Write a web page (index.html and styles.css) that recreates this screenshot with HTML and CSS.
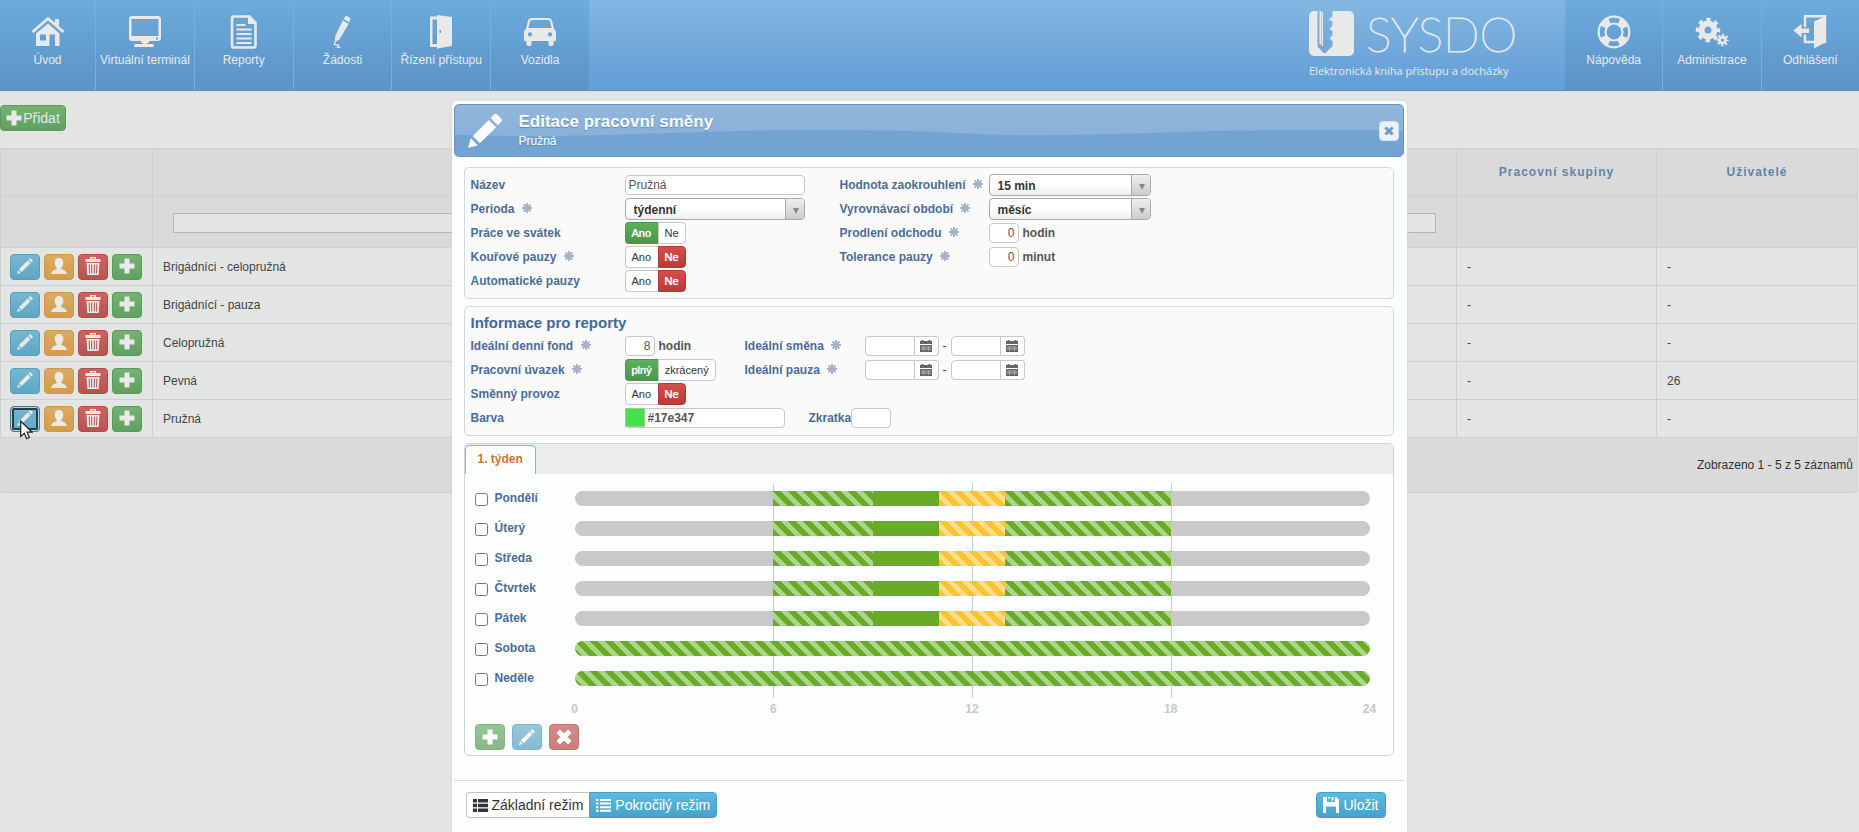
FILE: index.html
```html
<!DOCTYPE html>
<html lang="cs">
<head>
<meta charset="utf-8">
<title>SYSDO</title>
<link rel="stylesheet" href="styles.css">
</head>
<body>
<svg class="sprite" aria-hidden="true">
  <symbol id="i-pencil" viewBox="0 0 16 16"><path d="M0 16l1.3-4.6 3.3 3.3zM2.2 10.4l7.6-7.6 3.400 3.400-7.600 7.600zM10.7 1.9l1.5-1.5a1.2 1.2 0 0 1 1.700 0l1.700 1.700a1.2 1.2 0 0 1 0 1.700l-1.500 1.500z"/></symbol>
  <symbol id="i-slim" viewBox="0 0 16 16"><path d="M0 16l1.200-3.800 2.600 2.600zM1.900 11.300l8.800-8.800 2.800 2.800-8.800 8.800zM11.500 1.700L13.200 0 16 2.800l-1.700 1.700z"/></symbol>
  <symbol id="i-user" viewBox="0 0 16 16"><path d="M8 0c2.600 0 4.300 1.700 4.300 4.600 0 2.400-1 4.400-2 5.300v1.100c2.600.9 5.200 2 5.700 5H0c.5-3 3.100-4.100 5.700-5V9.900c-1-.9-2-2.900-2-5.300C3.700 1.700 5.400 0 8 0z"/></symbol>
  <symbol id="i-trash" viewBox="0 0 16 18"><path fill-rule="evenodd" d="M5 0h6v2h4.500v3H.5V2H5zM6.500 1.200V2h3v-.8zM1.500 6h13l-.8 12H2.300zM3.600 7.500l.4 9h1l-.3-9zM6 7.500l.2 9h1l-.1-9zM8.900 7.500l-.1 9h1l.2-9zM11.300 7.500l-.3 9h1l.4-9z"/></symbol>
  <symbol id="i-plus" viewBox="0 0 16 16"><path d="M5.500.5h5v5h5v5h-5v5h-5v-5h-5v-5h5z"/></symbol>
  <symbol id="i-cross" viewBox="0 0 16 16"><path d="M4 1.500l4 4 4-4 2.500 2.500-4 4 4 4-2.500 2.500-4-4-4 4L1.500 12l4-4-4-4z" stroke="currentColor" stroke-width="1.500" stroke-linejoin="round"/></symbol>
  <symbol id="i-star" viewBox="0 0 12 12"><path d="M6 0v12M0 6h12M1.800 1.800l8.400 8.400M10.200 1.800l-8.400 8.400" fill="none" stroke="currentColor" stroke-width="2.300"/></symbol>
  <symbol id="i-cal" viewBox="0 0 12 12"><path fill-rule="evenodd" d="M0 1h1.500V0h2v1h5V0h2v1H12v3H0zM0 5h12v7H0zM1 6.800v.5h10v-.5zM1 8.800v.5h10v-.5zM3.500 7v4H4V7zM8 7v4h.5V7z"/></symbol>
  <symbol id="i-list" viewBox="0 0 15 13"><path d="M0 0h4v3.500H0zM5 0h10v3.500H5zM0 4.700h4v3.500H0zM5 4.700h10v3.500H5zM0 9.400h4v3.500H0zM5 9.400h10v3.500H5z"/></symbol>
  <symbol id="i-lines" viewBox="0 0 15 13"><path d="M0 0h2.500v2H0zM4 0h11v2H4zM0 3.600h2.500v2H0zM4 3.600h11v2H4zM0 7.200h2.500v2H0zM4 7.200h11v2H4zM0 10.800h2.500v2H0zM4 10.800h11v2H4z"/></symbol>
  <symbol id="i-save" viewBox="0 0 16 16"><path d="M0 0h4v5h8V0h1.500L16 2.500V16h-3V9.500H3V16H0zM8.500 0h2v3.500h-2zM5 0h2v1.500H5z"/></symbol>
</svg>

<header class="topbar">
  <nav class="menu menu-main">
    <a href="#"><svg viewBox="0 0 34 34"><path d="M1.500 17L17 3.500 32.500 17" fill="none" stroke="currentColor" stroke-width="2.800"/><path fill-rule="evenodd" d="M24 4h4v9l-4-3.500zM17 8.500l11.500 10V31H24V19.500h-5.500V31H5V18.500zM9 19.500v6h6v-6z"/></svg>Úvod</a>
    <a href="#"><svg viewBox="0 0 34 34"><path fill-rule="evenodd" d="M4 1h26a3 3 0 0 1 3 3v19a3 3 0 0 1-3 3h-9v2h-2v1h5.500a1.400 1.400 0 0 1 0 3h-17a1.400 1.400 0 0 1 0-3H15v-1h-2v-2H4a3 3 0 0 1-3-3V4a3 3 0 0 1 3-3zM3.500 4v17h27V4zM28 22.500v2h2v-2z"/></svg>Virtuální terminál</a>
    <a href="#"><svg viewBox="0 0 34 34"><path d="M7 1.500h15.500l6 6.500v22.500a2 2 0 0 1-2 2H7a2 2 0 0 1-2-2v-27a2 2 0 0 1 2-2z" fill="none" stroke="currentColor" stroke-width="2.600"/><path d="M21 1l8 8h-8zM9.500 9h9v2h-9zM9.500 13.500h15v2h-15zM9.500 18h15v2h-15zM9.500 22.500h15v2h-15zM9.500 27h15v2h-15z"/></svg>Reporty</a>
    <a href="#"><svg viewBox="0 0 34 34"><path d="M21 .5l4.500 2.700-1.300 4.300-5.500-3.500zM17.800 5.300l5.800 3.600-9 15.400-4.700 3 .3-6z"/><path d="M10 26.500l-.5 3 4 .8-1 2h3" fill="none" stroke="currentColor" stroke-width="1.300"/></svg>Žádosti</a>
    <a href="#"><svg viewBox="0 0 34 34"><path fill-rule="evenodd" d="M6 1.500h7V0l15 2v29l-15 2.500V32H6zM8.500 4.500V29H13V4.500zM15.500 15v3h1.500v-3z"/></svg>Řízení přístupu</a>
    <a href="#"><svg viewBox="0 0 34 34"><path fill-rule="evenodd" d="M9 3h16c2.500 0 3.700 1.400 4.200 3.500L31 14c1.400.9 2 2 2 3.600V26h-2.500v3.500c0 2-5 2-5 0V26h-17v3.500c0 2-5 2-5 0V26H1v-8.400C1 16 1.600 14.900 3 14l1.800-7.500C5.300 4.400 6.500 3 9 3zM9 5C7.700 5 7.200 5.700 6.900 6.900L5.300 13h23.400l-1.600-6.100C26.800 5.700 26.300 5 25 5zM7 17.200a2.200 2.200 0 1 0 .01 0zM27 17.200a2.200 2.200 0 1 0 .01 0z"/></svg>Vozidla</a>
  </nav>
  <div class="brand">
    <div class="brand-row">
      <svg class="brand-mark" viewBox="0 0 45 45"><path fill-rule="evenodd" d="M5 0h35a5 5 0 0 1 5 5v35a5 5 0 0 1-5 5H5a5 5 0 0 1-5-5V5a5 5 0 0 1 5-5zM8.500 0v35.500l6 6.500h2l7-7v-5l-3-2.500 3-3.500v-4l-3-2 3-3.500v-4l-4-2 4-3v-5.500h-11v33.500h-2V0z"/><path d="M13 1h1v34h-1z"/></svg>
      <span class="brand-name">SYSDO</span>
    </div>
    <span class="brand-tag">Elektronická kniha přístupu a docházky</span>
  </div>
  <nav class="menu menu-side">
    <a href="#"><svg viewBox="0 0 34 34"><circle cx="17" cy="17" r="15.300" fill="none" stroke="currentColor" stroke-width="2.200"/><circle cx="17" cy="17" r="8.500" fill="none" stroke="currentColor" stroke-width="2.200"/><circle cx="17" cy="17" r="12" fill="none" stroke="currentColor" stroke-width="8" stroke-dasharray="8.850 10" stroke-dashoffset="-5"/></svg>Nápověda</a>
    <a href="#"><svg viewBox="0 0 34 34"><circle cx="13" cy="15" r="6.500" fill="none" stroke="currentColor" stroke-width="6"/><circle cx="13" cy="15" r="10.500" fill="none" stroke="currentColor" stroke-width="3.500" stroke-dasharray="4.250 4" stroke-dashoffset="2"/><circle cx="27.500" cy="25" r="3" fill="none" stroke="currentColor" stroke-width="2.800"/><circle cx="27.500" cy="25" r="5" fill="none" stroke="currentColor" stroke-width="2.500" stroke-dasharray="2 1.930" stroke-dashoffset="1"/></svg>Administrace</a>
    <a href="#"><svg viewBox="0 0 34 34"><path d="M12 12V1.300h20V27h-5M12 19.500V27h9" fill="none" stroke="currentColor" stroke-width="2.400"/><path d="M33 1v26l-12 6.500V6.500zM.500 15.500L8.500 9v4.500H16v4.500H8.500v4.500z"/></svg>Odhlášení</a>
  </nav>
</header>

<main class="page">
  <button class="btn green add" type="button"><svg><use href="#i-plus"/></svg>Přidat</button>
  <table class="grid">
    <colgroup><col class="c-act"><col><col class="c-num"><col class="c-last"></colgroup>
    <thead>
      <tr class="head"><th></th><th></th><th>Pracovní skupiny</th><th>Uživatelé</th></tr>
      <tr class="filter"><td></td><td><input type="text" aria-label="Filtr názvu"></td><td></td><td></td></tr>
    </thead>
    <tbody>
      <tr><td><div class="acts"><button class="btn blue sq" aria-label="Upravit"><svg><use href="#i-slim"/></svg></button><button class="btn orange sq" aria-label="Uživatelé"><svg><use href="#i-user"/></svg></button><button class="btn red sq" aria-label="Smazat"><svg class="trash"><use href="#i-trash"/></svg></button><button class="btn green sq" aria-label="Přidat"><svg><use href="#i-plus"/></svg></button></div></td><td>Brigádníci - celopružná</td><td>-</td><td>-</td></tr>
      <tr><td><div class="acts"><button class="btn blue sq" aria-label="Upravit"><svg><use href="#i-slim"/></svg></button><button class="btn orange sq" aria-label="Uživatelé"><svg><use href="#i-user"/></svg></button><button class="btn red sq" aria-label="Smazat"><svg class="trash"><use href="#i-trash"/></svg></button><button class="btn green sq" aria-label="Přidat"><svg><use href="#i-plus"/></svg></button></div></td><td>Brigádnící - pauza</td><td>-</td><td>-</td></tr>
      <tr><td><div class="acts"><button class="btn blue sq" aria-label="Upravit"><svg><use href="#i-slim"/></svg></button><button class="btn orange sq" aria-label="Uživatelé"><svg><use href="#i-user"/></svg></button><button class="btn red sq" aria-label="Smazat"><svg class="trash"><use href="#i-trash"/></svg></button><button class="btn green sq" aria-label="Přidat"><svg><use href="#i-plus"/></svg></button></div></td><td>Celopružná</td><td>-</td><td>-</td></tr>
      <tr><td><div class="acts"><button class="btn blue sq" aria-label="Upravit"><svg><use href="#i-slim"/></svg></button><button class="btn orange sq" aria-label="Uživatelé"><svg><use href="#i-user"/></svg></button><button class="btn red sq" aria-label="Smazat"><svg class="trash"><use href="#i-trash"/></svg></button><button class="btn green sq" aria-label="Přidat"><svg><use href="#i-plus"/></svg></button></div></td><td>Pevná</td><td>-</td><td>26</td></tr>
      <tr><td><div class="acts"><button class="btn blue sq focused" aria-label="Upravit"><svg><use href="#i-slim"/></svg></button><button class="btn orange sq" aria-label="Uživatelé"><svg><use href="#i-user"/></svg></button><button class="btn red sq" aria-label="Smazat"><svg class="trash"><use href="#i-trash"/></svg></button><button class="btn green sq" aria-label="Přidat"><svg><use href="#i-plus"/></svg></button><svg class="cursor" viewBox="0 0 13 20"><path d="M.7 1v15.500l3.600-3.300 2.300 5.500 2.800-1.200-2.300-5.300H12z" fill="#fff" stroke="#222" stroke-width="1.200"/></svg></div></td><td>Pružná</td><td>-</td><td>-</td></tr>
    </tbody>
  </table>
  <div class="summary">Zobrazeno 1 - 5 z 5 záznamů</div>
</main>

<div class="dialog" role="dialog" aria-labelledby="dlg-title">
  <div class="dialog-head">
    <svg class="wave" viewBox="0 0 950 53" preserveAspectRatio="none"><path d="M0 31C130 36 240 25 380 26S510 32 590 31.500 760 26 838 26 920 26 950 27V53H0z"/></svg>
    <svg class="dialog-icon"><use href="#i-pencil"/></svg>
    <div class="dialog-titles"><h1 id="dlg-title">Editace pracovní směny</h1><p>Pružná</p></div>
    <button class="close" type="button" aria-label="Zavřít"><svg><use href="#i-cross"/></svg></button>
  </div>

  <form class="dialog-body">
    <section class="panel form-basic">
      <label for="nazev">Název</label>
      <div><input class="txt" id="nazev" type="text" value="Pružná"></div>
      <label for="zaok">Hodnota zaokrouhlení <svg class="star"><use href="#i-star"/></svg></label>
      <div><span class="sel short"><select id="zaok"><option>15 min</option></select></span></div>

      <label for="perioda">Perioda <svg class="star"><use href="#i-star"/></svg></label>
      <div><span class="sel"><select id="perioda"><option>týdenní</option></select></span></div>
      <label for="vyrov">Vyrovnávací období <svg class="star"><use href="#i-star"/></svg></label>
      <div><span class="sel short"><select id="vyrov"><option>měsíc</option></select></span></div>

      <span class="lbl">Práce ve svátek</span>
      <div class="toggle"><label class="on"><input type="radio" name="svatek" checked>Ano</label><label><input type="radio" name="svatek">Ne</label></div>
      <label for="prodl">Prodlení odchodu <svg class="star"><use href="#i-star"/></svg></label>
      <div><input class="num" id="prodl" type="text" value="0"><span class="unit">hodin</span></div>

      <span class="lbl">Kouřové pauzy <svg class="star"><use href="#i-star"/></svg></span>
      <div class="toggle"><label><input type="radio" name="kour">Ano</label><label class="off"><input type="radio" name="kour" checked>Ne</label></div>
      <label for="toler">Tolerance pauzy <svg class="star"><use href="#i-star"/></svg></label>
      <div><input class="num" id="toler" type="text" value="0"><span class="unit">minut</span></div>

      <span class="lbl">Automatické pauzy</span>
      <div class="toggle"><label><input type="radio" name="auto">Ano</label><label class="off"><input type="radio" name="auto" checked>Ne</label></div>
    </section>

    <section class="panel form-report">
      <h2>Informace pro reporty</h2>
      <label for="fond">Ideální denní fond <svg class="star"><use href="#i-star"/></svg></label>
      <div><input class="num" id="fond" type="text" value="8"><span class="unit">hodin</span></div>
      <label for="smena">Ideální směna <svg class="star"><use href="#i-star"/></svg></label>
      <div class="range"><span class="time"><input id="smena" type="text"><button type="button" aria-label="Vybrat čas"><svg><use href="#i-cal"/></svg></button></span>-<span class="time"><input type="text" aria-label="Směna do"><button type="button" aria-label="Vybrat čas"><svg><use href="#i-cal"/></svg></button></span></div>

      <span class="lbl">Pracovní úvazek <svg class="star"><use href="#i-star"/></svg></span>
      <div class="toggle"><label class="on"><input type="radio" name="uvazek" checked>plný</label><label><input type="radio" name="uvazek">zkrácený</label></div>
      <label for="pauza">Ideální pauza <svg class="star"><use href="#i-star"/></svg></label>
      <div class="range"><span class="time"><input id="pauza" type="text"><button type="button" aria-label="Vybrat čas"><svg><use href="#i-cal"/></svg></button></span>-<span class="time"><input type="text" aria-label="Pauza do"><button type="button" aria-label="Vybrat čas"><svg><use href="#i-cal"/></svg></button></span></div>

      <span class="lbl first">Směnný provoz</span>
      <div class="toggle"><label><input type="radio" name="provoz">Ano</label><label class="off"><input type="radio" name="provoz" checked>Ne</label></div>

      <label class="first" for="barva">Barva</label>
      <div class="wide"><span class="color"><span class="swatch"></span><input id="barva" type="text" value="#17e347"></span><label for="zkratka">Zkratka</label><input class="abbr" id="zkratka" type="text"></div>
    </section>

    <section class="tabs">
      <div class="tab-bar"><a class="tab" href="#tyden">1. týden</a></div>
      <div class="week" id="tyden">
        <div class="days">
          <div class="lines"><i></i><i></i><i></i><i></i></div>
          <label><input type="checkbox">Pondělí</label><div class="bar"><i class="none q"></i><i class="flex h3"></i><i class="core h2"></i><i class="brk h2"></i><i class="flex h5"></i><i class="none q"></i></div>
          <label><input type="checkbox">Úterý</label><div class="bar"><i class="none q"></i><i class="flex h3"></i><i class="core h2"></i><i class="brk h2"></i><i class="flex h5"></i><i class="none q"></i></div>
          <label><input type="checkbox">Středa</label><div class="bar"><i class="none q"></i><i class="flex h3"></i><i class="core h2"></i><i class="brk h2"></i><i class="flex h5"></i><i class="none q"></i></div>
          <label><input type="checkbox">Čtvrtek</label><div class="bar"><i class="none q"></i><i class="flex h3"></i><i class="core h2"></i><i class="brk h2"></i><i class="flex h5"></i><i class="none q"></i></div>
          <label><input type="checkbox">Pátek</label><div class="bar"><i class="none q"></i><i class="flex h3"></i><i class="core h2"></i><i class="brk h2"></i><i class="flex h5"></i><i class="none q"></i></div>
          <label><input type="checkbox">Sobota</label><div class="bar"><i class="flex q"></i></div>
          <label><input type="checkbox">Neděle</label><div class="bar"><i class="flex q"></i></div>
        </div>
        <div class="axis"><span>0</span><span>6</span><span>12</span><span>18</span><span>24</span></div>
        <div class="week-acts"><button class="btn green sq" type="button" aria-label="Přidat" disabled><svg><use href="#i-plus"/></svg></button><button class="btn blue sq" type="button" aria-label="Upravit" disabled><svg><use href="#i-slim"/></svg></button><button class="btn red sq" type="button" aria-label="Odebrat" disabled><svg><use href="#i-cross"/></svg></button></div>
      </div>
    </section>
  </form>

  <div class="dialog-foot">
    <div class="modes"><button class="btn plain" type="button"><svg><use href="#i-list"/></svg>Základní režim</button><button class="btn blue" type="button"><svg><use href="#i-lines"/></svg>Pokročilý režim</button></div>
    <button class="btn blue save" type="button"><svg><use href="#i-save"/></svg>Uložit</button>
  </div>
</div>
</body>
</html>
```
FILE: styles.css
```css
* { box-sizing: border-box; }
body {
  margin: 0;
  min-height: 100vh;
  overflow: hidden;
  background: #e4e4e4;
  color: #444;
  font: 12px/16px "Liberation Sans", Arial, sans-serif;
}
button, input, select { font: inherit; color: inherit; margin: 0; }
h1, h2, p { margin: 0; }
svg { fill: currentColor; }
.sprite { display: none; }

/* top bar */
.topbar {
  display: flex;
  height: 91px;
  background: linear-gradient(#83b7e2, #629dd5);
  border-bottom: 1px solid #6d8db5;
  box-shadow: 0 1px 0 #cfdfee;
  color: #e9e9ea;
}
.menu { display: flex; background: linear-gradient(#6cabdc, #5c93c7); }
.menu-main { width: 589px; }
.menu-side { width: 294px; }
.menu a {
  flex: 1 0 0;
  display: flex;
  flex-direction: column;
  align-items: center;
  gap: 3px;
  padding-top: 15px;
  border-right: 1px solid #76aede;
  color: inherit;
  text-decoration: none;
  white-space: nowrap;
}
.menu-main a:first-child { flex: 0 0 96px; }
.menu a:last-child { border-right: 0; }
.menu svg { width: 34px; height: 34px; }
.brand { margin-left: auto; margin-right: 52px; padding-top: 11px; width: 204px; }
.brand-row { display: flex; align-items: center; gap: 12px; height: 45px; }
.brand-mark { width: 45px; height: 45px; flex: none; }
.brand-name { font: 100 48px/45px Lato, "Open Sans", sans-serif; -webkit-text-stroke: 1px; }
.brand-tag { display: block; margin-top: 7px; font: 11px/16px "Open Sans", "Noto Sans", sans-serif; white-space: nowrap; }

/* buttons */
.btn {
  display: inline-flex;
  align-items: center;
  justify-content: center;
  height: 26px;
  border: 1px solid;
  border-radius: 4px;
  padding: 0 5px;
  font-size: 14px;
  white-space: nowrap;
}
.btn svg { width: 16px; height: 16px; }
.btn.sq { width: 30px; padding: 0; }
.green { background: linear-gradient(#74b274, #62a062); border-color: #5a9a5a; color: #e9e9e9; }
.blue { background: linear-gradient(#74b7d0, #5fa6c6); border-color: #5a9ebc; color: #e9e9e9; }
.orange { background: linear-gradient(#dcaa63, #d49c4c); border-color: #cb9850; color: #e9e9e9; }
.red { background: linear-gradient(#c76562, #b95350); border-color: #ae4e4c; color: #e9e9e9; }

/* list page */
.page { padding-top: 14px; }
.add { min-width: 66px; gap: 1px; }
.grid {
  width: calc(100% - 1px);
  margin-top: 17px;
  table-layout: fixed;
  border-collapse: collapse;
  border: 1px solid #cecfce;
}
.c-act { width: 152px; }
.c-num { width: 200px; }
.c-last { width: 201px; }
.grid th, .grid td { padding: 0 10px; border: 1px solid #cecfce; text-align: left; }
.head { height: 48px; }
.filter { height: 51px; }
.head, .filter { background: #dadada; }
.grid th { padding-bottom: 2px; text-align: center; color: #6284a8; letter-spacing: 1px; }
.filter td { padding: 1px 20px 0; }
.filter input { display: block; width: 100%; height: 20px; border: 1px solid #b4b4b4; background: #e4e4e4; }
.grid tbody tr { height: 38px; background: #e2e5e4; }
.grid tbody td:first-child { padding: 1px 0 0 9px; }
.acts { position: relative; display: flex; gap: 4px; }
.acts svg { width: 16px; height: 16px; margin-bottom: 2px; }
.acts .trash { height: 18px; margin-bottom: 3px; }
.acts .focused { box-shadow: inset 0 0 0 1px #b8d4e0, inset 0 0 0 3px #223f4e; border-color: #4d7488; }
.acts .cursor { position: absolute; left: 10px; top: 14px; width: 13px; height: 20px; margin: 0; }
.summary {
  display: flex;
  align-items: center;
  justify-content: flex-end;
  height: 55px;
  margin-right: 1px;
  padding-right: 5px;
  background: #dadada;
  border-bottom: 1px solid #cecfce;
  border-radius: 0 0 4px 4px;
  color: #333;
}

/* dialog */
.dialog {
  position: absolute;
  top: 101px;
  left: 50%;
  width: 955px;
  margin-left: -478px;
  min-height: calc(100vh - 101px);
  padding: 3px 3px 0 2px;
  border-radius: 5px 5px 0 0;
  background: #fcfdfd;
  box-shadow: 0 0 3px #c8d0d8;
}
.dialog-head {
  position: relative;
  display: flex;
  align-items: center;
  height: 53px;
  padding: 0 4px 0 13px;
  border: 1px solid #6693c2;
  border-radius: 5px;
  background: linear-gradient(#93b6db, #88b1db 60%);
  color: #fff;
  overflow: hidden;
}
.wave { position: absolute; inset: 0; width: 100%; height: 100%; fill: #73a3d1; }
.dialog-icon { position: relative; width: 34px; height: 34px; margin-right: 17px; }
.dialog-titles { position: relative; flex: 1; text-shadow: 0 1px 1px #5d88b5; }
.dialog-titles h1 { font-size: 17px; line-height: 20px; }
.dialog-titles p { line-height: 18px; }
.close {
  position: relative;
  display: flex;
  align-items: center;
  justify-content: center;
  width: 20px;
  height: 20px;
  padding: 0;
  border: 1px solid #cfe2f5;
  border-radius: 4px;
  background: #e9f2fb;
  color: #6b96c2;
}
.close svg { width: 10px; height: 10px; }
.dialog-body { display: flex; flex-direction: column; gap: 7px; padding: 10px 10px 0; }
.panel {
  display: grid;
  grid-auto-rows: 24px;
  align-items: center;
  padding: 5px 6px;
  border: 1px solid #d0d8e0;
  border-radius: 5px;
  background: #fafafb;
}
.form-basic { grid-template-columns: 154px 215px 149px 1fr; }
.form-report { grid-template-columns: 154px 120px 120px 1fr; grid-template-rows: 22px; }
.panel h2 { grid-column: 1 / -1; font-size: 15px; color: #41699a; }
.panel > label, .lbl, .wide label { color: #4a6c98; font-weight: bold; }
.first { grid-column: 1; }
.wide { grid-column: 2 / -1; display: flex; align-items: center; }
.star { width: 10px; height: 10px; margin-left: 4px; color: #a3b1c8; }
.panel input[type="text"] {
  height: 20px;
  border: 1px solid #c6c8cc;
  border-radius: 4px;
  background: #fff;
  color: #555;
  padding: 0 3px;
}
.panel .txt { display: block; width: 180px; }
.panel .num { width: 30px; padding: 0 2px; text-align: right; }
.unit { margin-left: 4px; font-weight: bold; color: #555; }
.sel { position: relative; display: block; width: 180px; height: 22px; }
.sel.short { width: 162px; }
.sel select {
  appearance: none;
  width: 100%;
  height: 22px;
  padding: 2px 24px 0 8px;
  border: 1px solid #aaa;
  border-radius: 4px;
  background: linear-gradient(#fff 50%, #eee);
  color: #333;
  font-weight: bold;
}
.sel::before {
  content: "";
  position: absolute;
  top: 1px;
  right: 1px;
  width: 18px;
  height: 20px;
  border-left: 1px solid #aaa;
  border-radius: 0 3px 3px 0;
  background: linear-gradient(#eee, #ccc);
  pointer-events: none;
}
.sel::after {
  content: "";
  position: absolute;
  top: 10px;
  right: 6px;
  border: 3px solid transparent;
  border-top: 6px solid #888;
  border-bottom: 0;
  pointer-events: none;
}
.toggle { display: flex; font-size: 11px; }
.toggle label {
  position: relative;
  height: 22px;
  padding: 0 6px;
  border: 1px solid #c8c8c8;
  border-radius: 0 4px 4px 0;
  background: #fff;
  color: #333;
  line-height: 20px;
}
.toggle label:first-child { border-radius: 4px 0 0 4px; border-right: 0; min-width: 33px; }
.toggle input { position: absolute; inset: 0; margin: 0; opacity: 0; }
.toggle .on { background: linear-gradient(#5cb05c, #4b964b); border-color: #4b964b; color: #fff; text-shadow: 0 0 1px #fff; }
.toggle .off { background: linear-gradient(#d2504c, #b93a36); border-color: #b03c38; color: #fff; text-shadow: 0 0 1px #fff; }
.range { display: flex; align-items: center; gap: 4px; }
.time { display: flex; }
.panel .time input { width: 50px; border-radius: 4px 0 0 4px; }
.time button {
  display: flex;
  align-items: center;
  justify-content: center;
  width: 24px;
  height: 20px;
  padding: 0;
  border: 1px solid #c6c8cc;
  border-left: 0;
  border-radius: 0 4px 4px 0;
  background: #fff;
  color: #666;
}
.time svg { width: 12px; height: 12px; }
.color { display: flex; width: 160px; margin-right: 24px; position: relative; }
.swatch { position: absolute; left: 0; top: 0; width: 20px; height: 19px; background: #45e04d; border: 1px solid #7fdc84; }
.panel .color input { width: 100%; padding-left: 22px; font-weight: bold; }
.panel .abbr { width: 40px; }

/* week plan */
.tabs { border: 1px solid #d0d4d8; border-radius: 5px; }
.tab-bar { display: flex; align-items: flex-end; height: 30px; background: #ebecec; border-radius: 4px 4px 0 0; }
.tab {
  height: 29px;
  padding: 0 12px;
  border: 1px solid #86b4dc;
  border-bottom: 0;
  border-radius: 5px 5px 0 0;
  background: #fcfdfd;
  color: #cb7436;
  font-weight: bold;
  line-height: 27px;
  text-decoration: none;
}
.week { padding: 9px 23px 5px 10px; }
.days {
  position: relative;
  display: grid;
  grid-template-columns: 100px 1fr;
  grid-auto-rows: 30px;
  align-items: center;
  padding-bottom: 5px;
}
.days label { display: flex; align-items: center; gap: 7px; color: #4a6c98; font-weight: bold; }
.days input { width: 13px; height: 13px; margin: 3px 0 0; }
.lines { position: absolute; inset: 0 0 0 100px; display: grid; grid-template-columns: repeat(4, 1fr); }
.lines i + i { border-left: 1px solid #c9cbcd; }
.bar { position: relative; display: flex; height: 15px; border-radius: 8px; overflow: hidden; }
.bar i { flex: 6 0 0; }
.bar .h2 { flex-grow: 2; }
.bar .h3 { flex-grow: 3; }
.bar .h5 { flex-grow: 5; }
.none { background: #c9c9c9; }
.core { background: #69ab26; }
.flex {
  background: linear-gradient(45deg, #69ab26 25%, #acd58a 25% 50%, #69ab26 50% 75%, #acd58a 75%);
  background-size: 15px 15px;
}
.brk {
  background: linear-gradient(45deg, #fac42e 25%, #fddd8c 25% 50%, #fac42e 50% 75%, #fddd8c 75%);
  background-size: 15px 15px;
}
.axis { display: flex; justify-content: space-between; margin: 3px -12px 7px 88px; color: #c6c8ca; font-weight: bold; }
.axis span { width: 24px; text-align: center; }
.week-acts { display: flex; gap: 7px; }
.week-acts .btn { color: #fff; opacity: .75; }

/* dialog footer */
.dialog-foot {
  display: flex;
  justify-content: space-between;
  align-items: center;
  margin-top: 24px;
  padding: 11px 18px 12px 12px;
  border-top: 1px solid #d9dbdd;
}
.modes { display: flex; }
.modes .btn { gap: 4px; padding: 0 6px; }
.modes svg { width: 15px; height: 13px; }
.modes .plain { background: #fff; border-color: #c4c4c4; border-right: 0; border-radius: 4px 0 0 4px; color: #333; }
.modes .blue { border-radius: 0 4px 4px 0; }
.dialog-foot .blue { background: linear-gradient(#5bbadd, #47a3cd); border-color: #479fc5; color: #fff; }
.save { gap: 4px; padding: 0 6px; }
```
